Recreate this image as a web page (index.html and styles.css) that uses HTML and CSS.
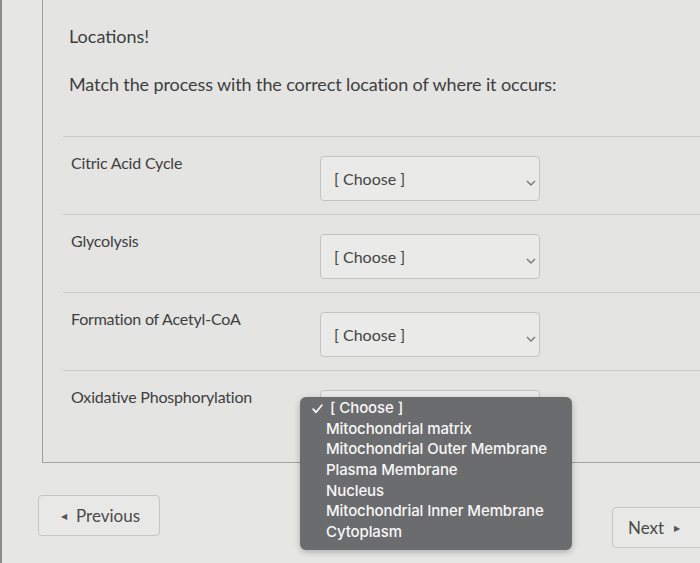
FILE: index.html
```html
<!DOCTYPE html>
<html>
<head>
<meta charset="utf-8">
<link rel="stylesheet" href="styles.css">
</head>
<body>
<div class="page">
  <div class="panel">
    <div class="title">Locations!</div>
    <div class="question">Match the process with the correct location of where it occurs:</div>
    <div class="rows">
      <div class="row">
        <div class="label">Citric Acid Cycle</div>
        <div class="select"><span>[ Choose ]</span><svg class="chev" width="10" height="6" viewBox="0 0 10 6"><path d="M1 1 L5 5 L9 1" fill="none" stroke="#777" stroke-width="1.4"/></svg></div>
      </div>
      <div class="row">
        <div class="label">Glycolysis</div>
        <div class="select"><span>[ Choose ]</span><svg class="chev" width="10" height="6" viewBox="0 0 10 6"><path d="M1 1 L5 5 L9 1" fill="none" stroke="#777" stroke-width="1.4"/></svg></div>
      </div>
      <div class="row">
        <div class="label">Formation of Acetyl-CoA</div>
        <div class="select"><span>[ Choose ]</span><svg class="chev" width="10" height="6" viewBox="0 0 10 6"><path d="M1 1 L5 5 L9 1" fill="none" stroke="#777" stroke-width="1.4"/></svg></div>
      </div>
      <div class="row last">
        <div class="label">Oxidative Phosphorylation</div>
        <div class="select"></div>
      </div>
    </div>
  </div>
  <div class="footer">
    <div class="btn prev"><span class="tri">&#9664;</span>Previous</div>
    <div class="btn next">Next<span class="tri">&#9654;</span></div>
  </div>
  <ul class="menu">
    <li class="checked"><svg class="check" width="11" height="10" viewBox="0 0 11 10"><path d="M1.2 5.2 L4 8.3 L9.8 1.2" fill="none" stroke="#f7f7f7" stroke-width="1.8" stroke-linecap="round" stroke-linejoin="round"/></svg>[ Choose ]</li>
    <li>Mitochondrial matrix</li>
    <li>Mitochondrial Outer Membrane</li>
    <li>Plasma Membrane</li>
    <li>Nucleus</li>
    <li>Mitochondrial Inner Membrane</li>
    <li>Cytoplasm</li>
  </ul>
</div>
</body>
</html>
```
FILE: styles.css
```css
html, body {
  margin: 0;
  padding: 0;
}
body {
  width: 700px;
  height: 563px;
  overflow: hidden;
  font-family: Lato, "Liberation Sans", sans-serif;
  color: #3e3e3e;
}
.page {
  position: relative;
  width: 700px;
  height: 563px;
  background: #e6e6e4;
  border-left: 2px solid #8c8c8c;
  box-sizing: border-box;
  overflow: hidden;
}
.panel {
  margin-left: 40px;
  height: 463px;
  box-sizing: border-box;
  border-left: 1px solid #9d9d9b;
  border-bottom: 1px solid #a3a3a1;
  padding-top: 25px;
  background: #e4e4e2;
}
.title {
  padding-left: 26px;
  font-size: 18px;
  line-height: 22px;
}
.question {
  padding-left: 26px;
  margin-top: 26px;
  font-size: 18px;
  line-height: 22px;
  letter-spacing: -0.1px;
}
.rows {
  margin-top: 41px;
  margin-left: 20px;
}
.row {
  border-top: 1px solid #cbcbc9;
  height: 77px;
  display: grid;
  grid-template-columns: 257px 220px;
  align-items: start;
}
.row.last {
  height: 93px;
}
.label {
  padding-left: 8px;
  padding-top: 16px;
  font-size: 16px;
  line-height: 20px;
  letter-spacing: -0.2px;
}
.select {
  margin-top: 19px;
  height: 45px;
  box-sizing: border-box;
  border: 1px solid #c3c3c1;
  border-radius: 4px;
  background: #eaeae8;
  display: flex;
  align-items: center;
  justify-content: space-between;
  padding: 0 3px 0 13px;
  font-size: 16px;
  color: #444;
}
.chev {
  margin-top: 8px;
}
.footer {
  display: flex;
  justify-content: space-between;
  align-items: flex-start;
  padding-top: 32px;
  padding-left: 36px;
}
.btn {
  height: 41px;
  box-sizing: border-box;
  border: 1px solid #c6c6c4;
  border-radius: 4px;
  background: #e8e8e6;
  display: flex;
  align-items: center;
  font-size: 17px;
  color: #4a4a4a;
}
.prev {
  width: 122px;
  padding-left: 22px;
}
.prev .tri {
  font-size: 8px;
  margin-right: 9px;
  color: #555;
}
.next {
  width: 100px;
  margin-top: 12px;
  margin-right: -12px;
  padding-left: 15px;
}
.next .tri {
  font-size: 8px;
  margin-left: 10px;
  color: #555;
}
.menu {
  position: absolute;
  left: 298px;
  top: 397px;
  width: 272px;
  height: 153px;
  margin: 0;
  padding: 1px 0 0 0;
  box-sizing: border-box;
  list-style: none;
  background: #6b6c6e;
  border-radius: 6px;
  box-shadow: 0 2px 6px rgba(0,0,0,0.25);
  font-family: Inter, "Noto Sans", sans-serif;
  font-size: 15px;
  font-weight: 500;
  color: #f7f7f7;
}
.menu li {
  height: 20.7px;
  line-height: 20.7px;
  padding-left: 26px;
  white-space: nowrap;
  letter-spacing: -0.1px;
}
.menu li.checked {
  padding-left: 12px;
}
.check {
  margin-right: 7px;
  vertical-align: -1px;
}
```
